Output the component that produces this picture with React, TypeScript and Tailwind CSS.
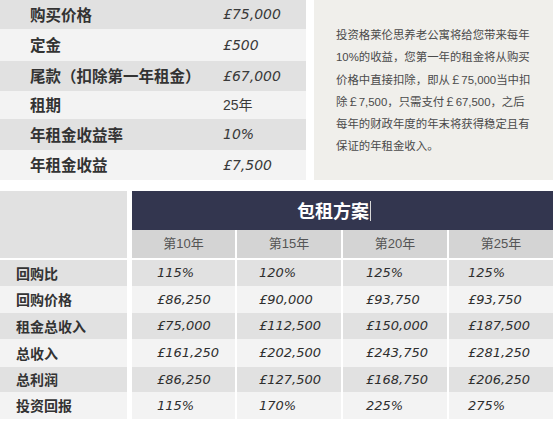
import React from "react";

const cjk = "font-['Noto_Sans_CJK_SC',sans-serif]";
const arialCjk = "font-['Liberation_Sans','Noto_Sans_CJK_SC',sans-serif]";
const num = "font-['DejaVu_Sans','Noto_Sans_CJK_SC',sans-serif]";

type TTopRow = { label: string; value: string; h: string; bg: string; plain?: boolean };

const topRows: TTopRow[] = [
  { label: "购买价格", value: "£75,000", h: "h-[29px]", bg: "bg-[#e1e1e1]" },
  { label: "定金", value: "£500", h: "h-[32px]", bg: "bg-[#f3f3f3]" },
  { label: "尾款（扣除第一年租金）", value: "£67,000", h: "h-[30px]", bg: "bg-[#e1e1e1]" },
  { label: "租期", value: "25年", h: "h-[28px]", bg: "bg-[#f3f3f3]", plain: true },
  { label: "年租金收益率", value: "10%", h: "h-[31px]", bg: "bg-[#e1e1e1]" },
  { label: "年租金收益", value: "£7,500", h: "h-[30px]", bg: "bg-[#f3f3f3]" },
];

const paragraph = [
  "投资格莱伦思养老公寓将给您带来每年",
  "10%的收益，您第一年的租金将从购买",
  "价格中直接扣除，即从￡75,000当中扣",
  "除￡7,500，只需支付￡67,500，之后",
  "每年的财政年度的年末将获得稳定且有",
  "保证的年租金收入。",
];

const years = ["第10年", "第15年", "第20年", "第25年"];
const colW = ["w-[103px]", "w-[104px]", "w-[104px]", "w-[104px]"];
const colPad = ["pl-[25px]", "pl-[22px]", "pl-[23px]", "pl-[19px]"];

type TPlanRow = { label: string; values: string[]; h: string; bg: string };

const planRows: TPlanRow[] = [
  { label: "回购比", values: ["115%", "120%", "125%", "125%"], h: "h-[26px]", bg: "bg-[#e1e1e1]" },
  { label: "回购价格", values: ["£86,250", "£90,000", "£93,750", "£93,750"], h: "h-[27px]", bg: "bg-[#f3f3f3]" },
  { label: "租金总收入", values: ["£75,000", "£112,500", "£150,000", "£187,500"], h: "h-[26px]", bg: "bg-[#e1e1e1]" },
  { label: "总收入", values: ["£161,250", "£202,500", "£243,750", "£281,250"], h: "h-[28px]", bg: "bg-[#f3f3f3]" },
  { label: "总利润", values: ["£86,250", "£127,500", "£168,750", "£206,250"], h: "h-[25px]", bg: "bg-[#e1e1e1]" },
  { label: "投资回报", values: ["115%", "170%", "225%", "275%"], h: "h-[27px]", bg: "bg-[#f3f3f3]" },
];

function App() {
  return (
    <div className="w-[553px] h-[427px] bg-white overflow-hidden">
      {/* top: summary + note */}
      <div className="flex h-[180px]">
        <div className="w-[306px] flex flex-col">
          {topRows.map((row) => (
            <div key={row.label} className={`flex items-center ${row.h} ${row.bg}`}>
              <div className={`w-[223px] pl-[30px] text-[15.5px] font-bold text-[#333] ${cjk}`}>{row.label}</div>
              <div className={`text-[14px] text-[#3a3a3a] ${row.plain ? arialCjk : `italic ${num}`}`}>{row.value}</div>
            </div>
          ))}
        </div>
        <div className="ml-[8px] flex-1 bg-[#f0efeb] pt-[24px] pl-[22px]">
          {paragraph.map((line) => (
            <div key={line} className={`h-[22.3px] leading-[22.3px] text-[11.4px] text-[#4a4a4a] whitespace-nowrap ${arialCjk}`}>
              {line}
            </div>
          ))}
        </div>
      </div>

      {/* bottom: rental plan table */}
      <div className="mt-[11px]">
        <div className="flex">
          <div className="w-[127px] h-[67px] bg-[#e1e1e1]" />
          <div className="ml-[5px] w-[421px] flex flex-col">
            <div className="h-[39px] bg-[#33364f] flex items-center pl-[165px]">
              <span className={`text-[18px] font-bold text-white ${cjk}`}>包租方案</span>
              <span className="inline-block w-px h-[20px] bg-[#d8d8d8] ml-[1px]" />
            </div>
            <div className="flex gap-[2px]">
              {years.map((y, i) => (
                <div
                  key={y}
                  className={`${colW[i]} h-[28px] bg-[#d4d4d4] flex items-center justify-center text-[13px] text-[#555] ${arialCjk}`}
                >
                  {y}
                </div>
              ))}
            </div>
          </div>
        </div>
        <div className="mt-[2px] flex flex-col">
          {planRows.map((row) => (
            <div key={row.label} className={`flex ${row.h}`}>
              <div className={`w-[127px] ${row.bg} flex items-center pl-[16px] text-[14px] font-bold text-[#333] ${cjk}`}>
                {row.label}
              </div>
              <div className="ml-[5px] flex gap-[2px]">
                {row.values.map((v, i) => (
                  <div
                    key={i}
                    className={`${colW[i]} ${colPad[i]} ${row.bg} flex items-center text-[13px] italic text-[#2e2e2e] ${num}`}
                  >
                    {v}
                  </div>
                ))}
              </div>
            </div>
          ))}
        </div>
      </div>
    </div>
  );
}

export default App;
